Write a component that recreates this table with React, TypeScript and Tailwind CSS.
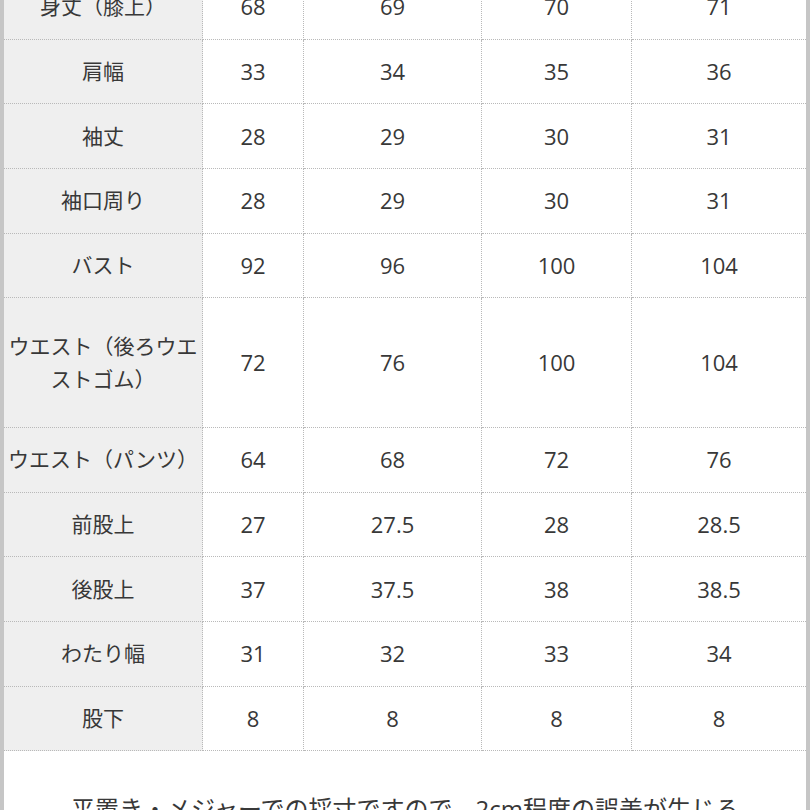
const rows: { label: string[]; values: string[]; tall?: boolean }[] = [
  { label: ["身丈（膝上）"], values: ["68", "69", "70", "71"] },
  { label: ["肩幅"], values: ["33", "34", "35", "36"] },
  { label: ["袖丈"], values: ["28", "29", "30", "31"] },
  { label: ["袖口周り"], values: ["28", "29", "30", "31"] },
  { label: ["バスト"], values: ["92", "96", "100", "104"] },
  { label: ["ウエスト（後ろウエ", "ストゴム）"], values: ["72", "76", "100", "104"], tall: true },
  { label: ["ウエスト（パンツ）"], values: ["64", "68", "72", "76"] },
  { label: ["前股上"], values: ["27", "27.5", "28", "28.5"] },
  { label: ["後股上"], values: ["37", "37.5", "38", "38.5"] },
  { label: ["わたり幅"], values: ["31", "32", "33", "34"] },
  { label: ["股下"], values: ["8", "8", "8", "8"] },
];

const cell = "flex items-center justify-center border-b border-dotted border-[#b9b9b9]";

export default function App() {
  return (
    <div
      className="h-[810px] w-[810px] overflow-hidden border-x-4 border-[#c6c6c6] bg-white text-[#383838]"
      style={{ fontFamily: '"Open Sans", "Noto Sans CJK JP", sans-serif' }}
    >
      <div className="-mt-[25px] grid grid-cols-[199px_101px_178px_150px_174px]">
        {rows.map((row, i) => (
          <div key={i} className="contents">
            <div
              className={`${cell} flex-col border-r bg-[#efefef] text-[21px] leading-[33px] ${
                row.tall ? "h-[129.4px]" : "h-[64.7px]"
              }`}
            >
              {row.label.map((line) => (
                <span key={line} className="whitespace-nowrap">
                  {line}
                </span>
              ))}
            </div>
            {row.values.map((v, j) => (
              <div
                key={j}
                className={`${cell} text-[22px] ${j < 3 ? "border-r" : ""} ${
                  row.tall ? "h-[129.4px]" : "h-[64.7px]"
                }`}
              >
                {v}
              </div>
            ))}
          </div>
        ))}
      </div>
      <p className="mt-[40px] whitespace-nowrap text-center text-[24px] leading-[36px]">
        平置き・メジャーでの採寸ですので、2cm程度の誤差が生じる
      </p>
    </div>
  );
}
